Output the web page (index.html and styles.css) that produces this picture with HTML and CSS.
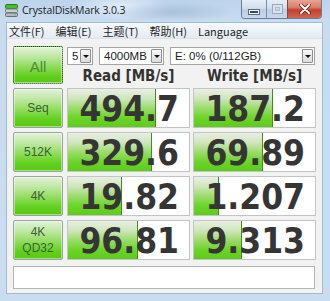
FILE: index.html
```html
<!DOCTYPE html>
<html lang="zh">
<head>
<meta charset="utf-8">
<title>CrystalDiskMark 3.0.3</title>
<link rel="stylesheet" href="styles.css">
</head>
<body>
<div class="window">
  <div class="titlebar">
    <svg class="app-icon" width="13" height="13" viewBox="0 0 13 13">
      <rect x="0.5" y="0.5" width="12" height="4" rx="1" fill="#3cc02c" stroke="#2a7a22"/>
      <rect x="0.5" y="5" width="12" height="3.5" rx="1" fill="#c9cdd2" stroke="#7a8088"/>
      <rect x="0.5" y="9" width="12" height="3.5" rx="1" fill="#b4b9bf" stroke="#6a7078"/>
      <rect x="9" y="10.3" width="2" height="1" fill="#50d040"/>
    </svg>
    <span class="title">CrystalDiskMark 3.0.3</span>
    <div class="caption">
      <div class="cap-btn cap-min"><span class="min-glyph"></span></div>
      <div class="cap-btn cap-max"><span class="max-glyph"></span></div>
      <div class="cap-btn cap-close">
        <svg width="12" height="10" viewBox="0 0 12 10">
          <path d="M2 1 L10 9 M10 1 L2 9" stroke="#5a1a12" stroke-width="3.4" stroke-linecap="round"/>
          <path d="M2 1 L10 9 M10 1 L2 9" stroke="#ffffff" stroke-width="2" stroke-linecap="round"/>
        </svg>
      </div>
    </div>
  </div>
  <div class="client">
    <div class="menubar">
      <span class="menu-item">文件(F)</span>
      <span class="menu-item">编辑(E)</span>
      <span class="menu-item">主题(T)</span>
      <span class="menu-item">帮助(H)</span>
      <span class="menu-item">Language</span>
    </div>
    <div class="main">
      <div class="head">
        <div class="btn btn-all"><span>All</span></div>
        <div class="combos">
          <div class="combo combo-count"><span class="combo-text">5</span><span class="combo-arrow"></span></div>
          <div class="combo combo-size"><span class="combo-text">4000MB</span><span class="combo-arrow"></span></div>
          <div class="combo combo-drive"><span class="combo-text">E: 0% (0/112GB)</span><span class="combo-arrow"></span></div>
        </div>
        <div class="col-head">Read [MB/s]</div>
        <div class="col-head">Write [MB/s]</div>
      </div>
      <div class="row">
        <div class="btn"><span>Seq</span></div>
        <div class="cell" style="--w: 88px">494.7</div>
        <div class="cell" style="--w: 79px">187.2</div>
      </div>
      <div class="row">
        <div class="btn"><span>512K</span></div>
        <div class="cell" style="--w: 84px">329.6</div>
        <div class="cell" style="--w: 69px">69.89</div>
      </div>
      <div class="row">
        <div class="btn"><span>4K</span></div>
        <div class="cell" style="--w: 54px">19.82</div>
        <div class="cell" style="--w: 25px">1.207</div>
      </div>
      <div class="row">
        <div class="btn btn-two"><span>4K<br>QD32</span></div>
        <div class="cell" style="--w: 70px">96.81</div>
        <div class="cell" style="--w: 48px">9.313</div>
      </div>
      <div class="comment"></div>
    </div>
  </div>
</div>
</body>
</html>
```
FILE: styles.css
```css
* { box-sizing: border-box; }
html, body { margin: 0; padding: 0; }
body {
  width: 330px;
  height: 301px;
  overflow: hidden;
  background: #c7daee;
  font-family: "Liberation Sans", Arial, sans-serif;
}
.window {
  width: 330px;
  height: 301px;
  display: flex;
  flex-direction: column;
  background: linear-gradient(to bottom, #b9d0e9 0px, #c8dbef 22px, #cadcf0 100%);
}
.titlebar {
  height: 22px;
  display: flex;
  align-items: flex-start;
  background:
    radial-gradient(ellipse 60px 10px at 175px 12px, rgba(150,175,205,0.55), rgba(150,175,205,0) 100%),
    radial-gradient(ellipse 50px 14px at 120px 6px, rgba(240,246,252,0.7), rgba(240,246,252,0) 100%),
    linear-gradient(to bottom, #bcd3ec, #c9dcf0);
}
.app-icon {
  margin: 4px 0 0 5px;
  flex: none;
}
.title {
  margin: 3px 0 0 4px;
  font-family: "Open Sans", "Noto Sans", sans-serif;
  font-size: 10.5px;
  line-height: 14px;
  color: #1b1b1b;
  letter-spacing: -0.1px;
}
.caption {
  margin-left: auto;
  margin-right: 8px;
  display: flex;
  height: 19px;
  border: 1px solid #6b7d94;
  border-top: none;
  border-radius: 0 0 4px 4px;
  overflow: hidden;
}
.cap-btn {
  height: 18px;
  display: flex;
  align-items: center;
  justify-content: center;
}
.cap-min {
  width: 25px;
  border-right: 1px solid #7d8ea4;
  background: linear-gradient(to bottom, #e6eef8 0%, #d2dfee 45%, #bccee3 55%, #c9d9ec 100%);
}
.cap-max {
  width: 21px;
  border-right: 1px solid #7a4a44;
  background: linear-gradient(to bottom, #e6eef8 0%, #d2dfee 45%, #bccee3 55%, #c9d9ec 100%);
}
.cap-close {
  width: 33px;
  background: linear-gradient(to bottom, #e8a393 0%, #d8806c 40%, #c4412c 55%, #d06450 100%);
}
.min-glyph {
  width: 10px;
  height: 4px;
  margin-top: 6px;
  background: #3a4a5e;
  border: 1px solid #f4f8fc;
  box-shadow: 0 0 0 1px #5a6a80;
}
.max-glyph {
  width: 9px;
  height: 8px;
  border: 2px solid #d8e3ef;
  box-shadow: 0 0 0 1px #9aaabb, inset 0 0 0 1px #b0bfcf;
}
.client {
  flex: 1;
  margin: 0 7px 7px 6px;
  border: 1px solid #a3b9d2;
  background: #f2f2f2;
  display: flex;
  flex-direction: column;
}
.menubar {
  height: 16px;
  display: flex;
  align-items: center;
  gap: 11px;
  padding-left: 2px;
  background: linear-gradient(to bottom, #f6f9fc, #e4ebf4);
  border-bottom: 1px solid #dbe3ec;
  font-family: "Noto Sans CJK SC", "Noto Sans", sans-serif;
  font-size: 11px;
  color: #1e1e1e;
}
.main {
  display: flex;
  flex-direction: column;
  gap: 4px;
  padding: 7px 6px 3px 6px;
}
.head, .row {
  display: grid;
  grid-template-columns: 51px 123px 123px;
  column-gap: 3px;
}
.head {
  grid-template-rows: 19px 19px;
}
.row {
  height: 40px;
}
.btn {
  width: 50px;
  border: 1px solid #9aa59a;
  border-radius: 2px;
  background: linear-gradient(to bottom, #e2f2d8 0%, #c2e8a8 25%, #8edc5a 55%, #62d01e 80%, #58c814 100%);
  box-shadow: inset 0 0 0 1px rgba(255,255,255,0.45);
  display: flex;
  align-items: center;
  justify-content: center;
  text-align: center;
  font-size: 12px;
  line-height: 16px;
  color: #3d5f33;
}
.btn-all {
  grid-row: 1 / 3;
  border: 1px dotted #333;
  font-size: 15px;
  color: #4d8a3c;
  padding-top: 4px;
}
.combos {
  grid-column: 2 / 4;
  display: flex;
  gap: 6px;
  margin-top: 1px;
  height: 18px;
}
.combo {
  height: 18px;
  display: flex;
  align-items: center;
  background: #fff;
  border: 1px solid #a4a4a4;
  padding: 0 1px 0 4px;
}
.combo-count { width: 26px; }
.combo-size { width: 65px; }
.combo-drive { width: 145px; }
.combo-text {
  flex: 1;
  font-size: 11.5px;
  color: #222;
  white-space: nowrap;
}
.combo-arrow {
  width: 11px;
  height: 14px;
  border: 1px solid #8f8f8f;
  border-radius: 1px;
  background: linear-gradient(to bottom, #f7f7f7, #dcdcdc);
  position: relative;
}
.combo-arrow::after {
  content: "";
  position: absolute;
  left: 2px;
  top: 5px;
  border-left: 3px solid transparent;
  border-right: 3px solid transparent;
  border-top: 3px solid #111;
}
.col-head {
  grid-row: 2;
  text-align: center;
  font-family: "DejaVu Sans Condensed", "DejaVu Sans", sans-serif;
  font-stretch: condensed;
  font-weight: bold;
  font-size: 15px;
  line-height: 23px;
  height: 19px;
  color: #333;
  white-space: nowrap;
}
.col-head:nth-of-type(3) { grid-column: 2; }
.col-head:nth-of-type(4) { grid-column: 3; }
.cell {
  height: 40px;
  border: 1px solid #c4c4c4;
  background-color: #fff;
  background-image:
    linear-gradient(to left, #3f8f1c 0 1px, transparent 1px),
    linear-gradient(to bottom, #e9efe4 0%, #cfe6bc 25%, #9cdc6c 50%, #6ed42a 75%, #5ccc18 100%);
  background-size: var(--w) 100%, var(--w) 100%;
  background-repeat: no-repeat;
  text-align: right;
  padding: 3px 10px 0 0;
  font-family: "DejaVu Sans Condensed", "DejaVu Sans", sans-serif;
  font-stretch: condensed;
  font-weight: bold;
  font-size: 35px;
  line-height: 35px;
  color: #353535;
  white-space: nowrap;
}
.comment {
  margin-top: 2px;
  height: 23px;
  width: 302px;
  background: #fff;
  border: 1px solid #b4b4b4;
}
```
